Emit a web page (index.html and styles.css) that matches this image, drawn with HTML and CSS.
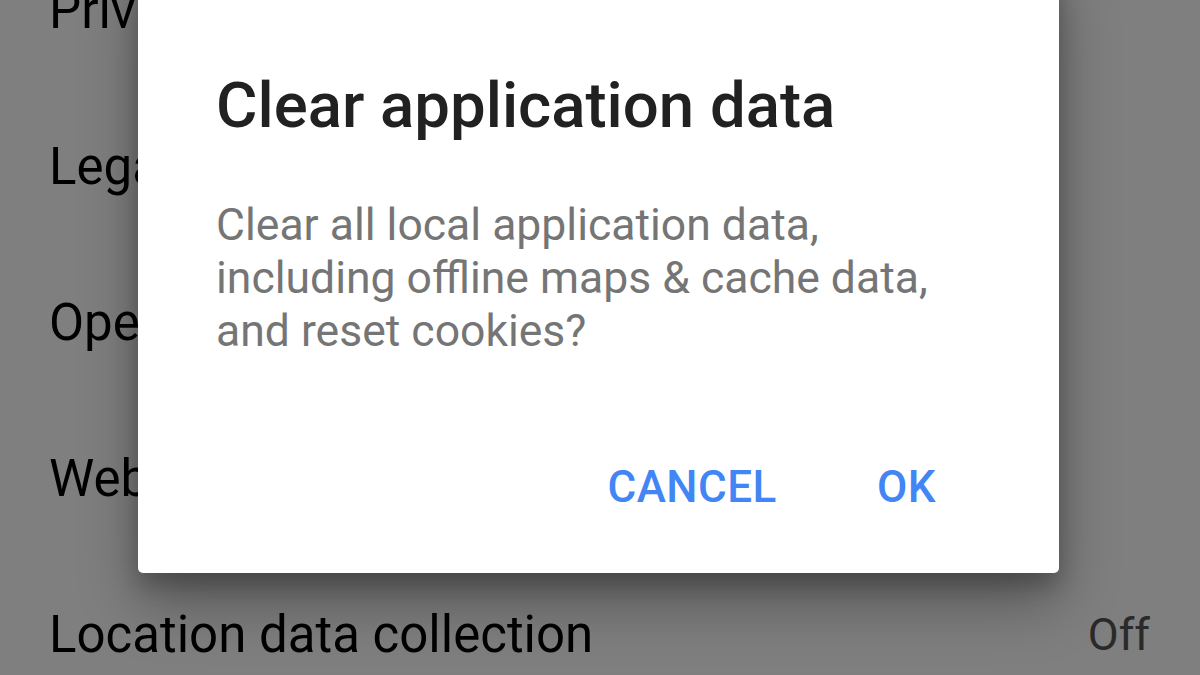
FILE: index.html
```html
<!DOCTYPE html>
<html lang="en">
<head>
<meta charset="utf-8">
<title>Clear application data</title>
<link rel="stylesheet" href="styles.css">
</head>
<body>
<div class="screen">
  <ul class="settings">
    <li class="row"><span class="label">Privacy Policy</span></li>
    <li class="row"><span class="label">Legal Notices</span></li>
    <li class="row"><span class="label">Open source licenses</span></li>
    <li class="row"><span class="label">Web History</span></li>
    <li class="row"><span class="label">Location data collection</span><span class="value">Off</span></li>
  </ul>
  <div class="scrim"></div>
  <div class="dialog" role="dialog">
    <h1 class="title">Clear application data</h1>
    <p class="message">Clear all local application data, including offline maps &amp; cache data, and reset cookies?</p>
    <div class="actions">
      <button class="btn">CANCEL</button>
      <button class="btn">OK</button>
    </div>
  </div>
</div>
</body>
</html>
```

FILE: styles.css
```css
* { box-sizing: border-box; }
html, body {
  margin: 0;
  padding: 0;
  width: 1200px;
  height: 675px;
  overflow: hidden;
  font-family: Roboto, "Noto Sans", sans-serif;
}
.screen {
  position: relative;
  width: 1200px;
  height: 675px;
  overflow: hidden;
  background: #ffffff;
}
.settings {
  list-style: none;
  margin: -68px 0 0 0;
  padding: 0;
}
.row {
  height: 156px;
  display: flex;
  align-items: center;
  justify-content: space-between;
  padding: 0 50px 0 49px;
  font-size: 51px;
  color: #000;
}
.value {
  color: #555;
  font-size: 45px;
}
.scrim {
  position: absolute;
  inset: 0;
  background: rgba(0,0,0,0.5);
}
.dialog {
  position: absolute;
  left: 138px;
  top: -40px;
  width: 921px;
  height: 613px;
  background: #fff;
  border-radius: 5px;
  box-shadow: 0 30px 60px rgba(0,0,0,0.32), 0 12px 22px rgba(0,0,0,0.22);
  padding: 108px 78px 0 78px;
  display: flex;
  flex-direction: column;
}
.title {
  margin: 0;
  font-size: 63.5px;
  font-weight: 500;
  color: #212121;
  line-height: 76px;
}
.message {
  margin: 55px 0 0 0;
  font-size: 44.5px;
  line-height: 53px;
  color: #757575;
  width: 760px;
}
.actions {
  margin-top: auto;
  margin-bottom: 60px;
  display: flex;
  justify-content: flex-end;
  gap: 100px;
  padding-right: 45px;
}
.btn {
  border: 0;
  background: none;
  padding: 0;
  font-family: Roboto, sans-serif;
  font-weight: 500;
  font-size: 44px;
  color: #4285f4;
  letter-spacing: 0.5px;
  line-height: 52px;
}
```
